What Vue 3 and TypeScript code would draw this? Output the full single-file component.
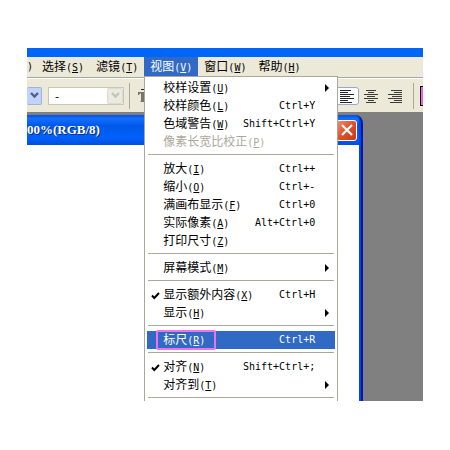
<script setup lang="ts">
import { ref } from 'vue'

interface MenuEntry {
  label: string
  key: string
  shortcut?: string
  submenu?: boolean
  checked?: boolean
  disabled?: boolean
  marked?: boolean
}

const menus = [
  { label: '选择', key: 'S' },
  { label: '滤镜', key: 'T' },
  { label: '视图', key: 'V' },
  { label: '窗口', key: 'W' },
  { label: '帮助', key: 'H' },
]

const openMenu = ref('视图')
const active = ref('标尺')

const groups: MenuEntry[][] = [
  [
    { label: '校样设置', key: 'U', submenu: true },
    { label: '校样颜色', key: 'L', shortcut: 'Ctrl+Y' },
    { label: '色域警告', key: 'W', shortcut: 'Shift+Ctrl+Y' },
    { label: '像素长宽比校正', key: 'P', disabled: true },
  ],
  [
    { label: '放大', key: 'I', shortcut: 'Ctrl++' },
    { label: '缩小', key: 'O', shortcut: 'Ctrl+-' },
    { label: '满画布显示', key: 'F', shortcut: 'Ctrl+0' },
    { label: '实际像素', key: 'A', shortcut: 'Alt+Ctrl+0' },
    { label: '打印尺寸', key: 'Z' },
  ],
  [{ label: '屏幕模式', key: 'M', submenu: true }],
  [
    { label: '显示额外内容', key: 'X', shortcut: 'Ctrl+H', checked: true },
    { label: '显示', key: 'H', submenu: true },
  ],
  [{ label: '标尺', key: 'R', shortcut: 'Ctrl+R', marked: true }],
  [
    { label: '对齐', key: 'N', shortcut: 'Shift+Ctrl+;', checked: true },
    { label: '对齐到', key: 'T', submenu: true },
  ],
]
</script>

<template>
  <main class="page">
    <div class="app">
      <div class="frame-top"></div>
      <nav class="menubar">
        <span class="cut">)</span>
        <div v-for="m in menus" :key="m.label" class="slot">
          <button class="top" :class="{ open: m.label === openMenu }" type="button">
            {{ m.label }}<span class="half">(<u>{{ m.key }}</u>)</span>
          </button>
          <div v-if="m.label === openMenu" class="menu" role="menu">
            <div v-for="(group, g) in groups" :key="g" class="group">
              <button
                v-for="item in group"
                :key="item.label"
                class="item"
                :class="{ active: item.label === active, marked: item.marked }"
                type="button"
                role="menuitem"
                :disabled="item.disabled"
              >
                <span class="tick">
                  <svg v-if="item.checked" width="9" height="9" viewBox="0 0 9 9">
                    <path d="M1 4.5 L3.3 7 L8 2" fill="none" stroke="#000" stroke-width="2" />
                  </svg>
                </span>
                <span class="label">{{ item.label }}<span class="half">(<u>{{ item.key }}</u>)</span></span>
                <span class="half">{{ item.shortcut }}</span>
                <span class="more">
                  <svg v-if="item.submenu" width="4" height="8" viewBox="0 0 4 8">
                    <path d="M0 0 L4 4 L0 8 Z" fill="#000" />
                  </svg>
                </span>
              </button>
            </div>
          </div>
        </div>
      </nav>

      <div class="toolbar">
        <button class="drop first" type="button" aria-label="字体">
          <svg width="9" height="7" viewBox="0 0 9 7"><path d="M1 1 L4.5 4.5 L8 1" fill="none" stroke="#4d6185" stroke-width="2.4" /></svg>
        </button>
        <div class="combo">
          <input class="combo-text" type="text" value="-" aria-label="字形" />
          <button class="drop off" type="button" aria-label="字形列表" disabled>
            <svg width="9" height="7" viewBox="0 0 9 7"><path d="M1 1 L4.5 4.5 L8 1" fill="none" stroke="#c6c5b8" stroke-width="2.4" /></svg>
          </button>
        </div>
        <span class="rule"></span>
        <svg class="size" width="14" height="16" viewBox="0 0 14 16">
          <path d="M3 1 H11 V3 H10 V2 H3 Z" fill="#222" />
          <path d="M0 4 H9 V7 H8 L7 5.5 H6 V13 L7 14 H2 L3 13 V5.5 H2 L1 7 H0 Z" fill="#77756d" />
        </svg>
        <div class="aligns">
          <button class="align on" type="button" aria-label="左对齐">
            <svg width="15" height="14" viewBox="0 0 15 14">
              <path d="M0 1.5H11M0 3.5H8M0 5.5H14M0 7.5H10M0 9.5H14M0 11.5H8M0 13.5H12" stroke="#26262a" />
            </svg>
          </button>
          <button class="align" type="button" aria-label="居中">
            <svg width="15" height="14" viewBox="0 0 15 14">
              <path d="M2 1.5H12M4 3.5H10M0 5.5H14M3 7.5H11M0 9.5H14M4 11.5H10M2 13.5H12" stroke="#3c3b38" />
            </svg>
          </button>
          <button class="align" type="button" aria-label="右对齐">
            <svg width="15" height="14" viewBox="0 0 15 14">
              <path d="M3 1.5H14M6 3.5H14M0 5.5H14M4 7.5H14M0 9.5H14M6 11.5H14M2 13.5H14" stroke="#3c3b38" />
            </svg>
          </button>
          <span class="rule"></span>
          <button class="swatch" type="button" aria-label="颜色"></button>
        </div>
      </div>

      <div class="desk">
        <section class="doc">
          <header class="caption">
            <span class="name">00%(RGB/8)</span>
            <button class="close" type="button" aria-label="关闭">
              <svg width="12" height="12" viewBox="0 0 12 12"><path d="M1 1 L11 11 M11 1 L1 11" stroke="#fff" stroke-width="2.2" /></svg>
            </button>
          </header>
          <div class="canvas"></div>
        </section>
      </div>
    </div>
  </main>
</template>

<style>
body {
  margin: 0;
  background: #fff;
}
</style>

<style scoped>
.page {
  padding: 48px 27px;
  font-family: 'Noto Sans CJK SC', sans-serif;
  font-size: 12px;
  color: #000;
}
button,
input {
  margin: 0;
  padding: 0;
  border: 0;
  background: none;
  font: inherit;
  color: inherit;
  box-sizing: border-box;
}
svg {
  display: block;
}
.app {
  position: relative;
  overflow: hidden;
  background: #ece9d8;
}
.frame-top {
  height: 9px;
  background: #0066fa;
}
.menubar {
  display: flex;
  height: 20px;
  border-bottom: 1px solid #aca899;
}
/* Half-width characters are 6px wide, half of a full-width cell. */
.half,
.cut {
  font-family: 'DejaVu Sans Mono', monospace;
  font-size: 10px;
}
.cut {
  width: 9px;
  line-height: 20px;
}
.slot {
  position: relative;
}
.top {
  display: block;
  height: 19px;
  padding: 0 6px 2px;
  line-height: 17px;
  white-space: nowrap;
}
.top.open {
  background: #316ac5;
  color: #fff;
}
.menu {
  position: absolute;
  z-index: 2;
  top: 19px;
  left: 0;
  width: 194px;
  box-sizing: border-box;
  padding: 2px;
  border: 1px solid #aca899;
  background: #fff;
}
.group + .group::before,
.group:last-child::after {
  content: '';
  display: block;
  height: 1px;
  margin: 3px 1px 5px;
  background: #aca899;
}
.item {
  position: relative;
  display: grid;
  grid-template-columns: 16px 1fr auto 20px;
  align-items: center;
  width: 100%;
  height: 18px;
  padding-bottom: 2px;
  line-height: 16px;
  text-align: left;
  white-space: nowrap;
}
.item:disabled {
  color: #aca899;
}
.item.active {
  background: #316ac5;
  color: #fff;
}
.item.marked::after {
  content: '';
  position: absolute;
  top: -1px;
  left: 9px;
  width: 60px;
  height: 20px;
  box-sizing: border-box;
  border: 2px solid #ee72ee;
  border-radius: 2px;
}
.tick {
  padding-left: 4px;
}
.more {
  padding-left: 10px;
}
.toolbar {
  display: flex;
  align-items: center;
  height: 34px;
  border-top: 1px solid #fff;
  box-sizing: border-box;
}
.drop {
  display: flex;
  align-items: center;
  justify-content: center;
  width: 16px;
  height: 16px;
  border-radius: 2px;
  background: #c1d2fb;
}
.drop.first {
  width: 15px;
  height: 18px;
  border: 1px solid #9db4dd;
  border-left: 0;
}
.drop.off {
  background: #ebeae0;
  border: 1px solid #dddbcd;
}
.combo {
  display: flex;
  align-items: center;
  width: 76px;
  height: 18px;
  margin-left: 6px;
  box-sizing: border-box;
  border: 1px solid #c9c7ba;
  background: #fff;
}
.combo-text {
  flex: 1;
  min-width: 0;
  padding-left: 6px;
}
.rule {
  width: 1px;
  height: 26px;
  margin-left: 5px;
  background: #aca899;
}
.size {
  margin-left: 8px;
}
.aligns {
  display: flex;
  align-items: center;
  margin-left: auto;
}
.align {
  display: flex;
  align-items: center;
  justify-content: center;
  width: 24px;
  height: 18px;
}
.align.on {
  border: 1px solid #98a9c8;
  border-radius: 3px;
  background: #fff;
}
.aligns .rule {
  margin: 0 6px;
}
.swatch {
  width: 3px;
  height: 20px;
  border: 1px solid #000;
  border-right: 0;
  background: #f060f0;
}
.desk {
  padding: 3px 60px 0 0;
  background: #808080;
}
.doc {
  padding-right: 2px;
  border-right: 2px solid #0a18a8;
  border-top-right-radius: 8px;
  background: #0046e8;
}
.caption {
  display: flex;
  align-items: center;
  justify-content: space-between;
  height: 30px;
  padding-right: 2px;
  border-top-right-radius: 5px;
  background: linear-gradient(#0a4fe0, #1470ff 12%, #0058e8 35%, #0061fa 75%, #0050dc);
}
.name {
  font: bold 13px/30px 'Liberation Serif', serif;
  color: #fff;
  text-shadow: 1px 1px 0 #0a2a80;
}
.close {
  display: flex;
  align-items: center;
  justify-content: center;
  width: 21px;
  height: 21px;
  border: 1px solid #fff;
  border-radius: 3px;
  background: linear-gradient(135deg, #f0906e, #e0502a 50%, #c83a14);
}
.canvas {
  height: 256px;
  background: #fff;
}
</style>
